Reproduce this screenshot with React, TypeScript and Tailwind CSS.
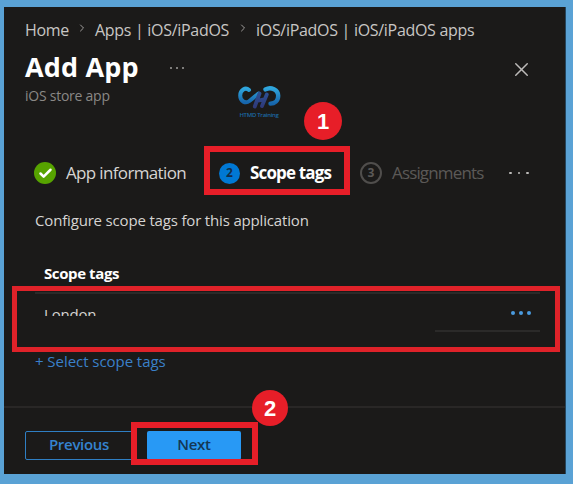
import { Check, ChevronRight, X } from "lucide-react";

interface MarkerProps {
  label: string;
  className: string;
}

function Marker({ label, className }: MarkerProps) {
  return (
    <span
      className={`absolute flex items-center justify-center rounded-full bg-[#e71e28] font-['Liberation_Sans'] font-bold text-white ${className}`}
    >
      {label}
    </span>
  );
}

function Dots({ className, size }: { className: string; size: string }) {
  return (
    <span className={`flex ${className}`}>
      {[0, 1, 2].map((i) => (
        <i key={i} className={`rounded-full bg-current ${size}`} />
      ))}
    </span>
  );
}

function Logo() {
  return (
    <div className="absolute left-[237px] top-[85px] w-[44px]">
      <svg viewBox="0 0 44 26" className="h-[26px] w-[44px]" fill="none" strokeLinecap="round">
        <defs>
          <linearGradient id="ring" x1="0" y1="0" x2="0" y2="1">
            <stop offset="0" stopColor="#2fa6dd" />
            <stop offset="1" stopColor="#1766ac" />
          </linearGradient>
          <linearGradient id="bar" x1="0" y1="0" x2="0" y2="1">
            <stop offset="0" stopColor="#2c4f93" />
            <stop offset="1" stopColor="#2f3a7a" />
          </linearGradient>
        </defs>
        <path d="M12 5C8.5 1.8 3.2 4.8 3.2 10.5C3.2 16.5 8.6 19 12.4 16C15.5 13.5 18.5 11 21.5 8.5" stroke="url(#ring)" strokeWidth="4" />
        <path d="M22.5 8.5L17.8 21.5M29.8 9.5L25 21M19.8 15.8L27.4 14.4" stroke="url(#bar)" strokeWidth="3.8" />
        <path d="M28.5 4.4C34 1.3 41.2 4.8 41.2 10.8C41.2 16 37.5 18.6 33.5 18.6" stroke="url(#ring)" strokeWidth="4.4" />
      </svg>
      <p className="-mt-px whitespace-nowrap text-center font-['Open_Sans'] text-[6px] font-semibold leading-[10px] tracking-[-0.3px] text-[#1b69a3]">
        HTMD Training
      </p>
    </div>
  );
}

export default function App() {
  return (
    <div className="relative h-[484px] w-[573px] overflow-hidden bg-[#5aa2d5] pl-1 pt-[7px] font-['Open_Sans',sans-serif]">
      <main className="flex h-[467px] w-[562px] flex-col border-r border-[#24465e] bg-[#1b1a19]">
        <nav className="flex h-[46px] items-center whitespace-nowrap pl-[21px] text-[16px] text-[#c8c6c4]">
          <span className="w-[51px] tracking-[-0.3px]">Home</span>
          <ChevronRight className="mb-1 h-3 w-[12px] text-[#a19f9d]" strokeWidth={2} />
          <span className="ml-[7px] w-[142px] tracking-[-0.3px]">Apps | iOS/iPadOS</span>
          <ChevronRight className="mb-1 h-3 w-[12px] text-[#a19f9d]" strokeWidth={2} />
          <span className="ml-[7px] tracking-[-0.3px]">iOS/iPadOS | iOS/iPadOS apps</span>
        </nav>

        <header className="flex h-[58px] items-start justify-between pl-[21px] pr-8">
          <div className="whitespace-nowrap">
            <div className="flex h-[30px] items-center">
              <h1 className="w-[145px] pb-0.5 text-[27px] font-bold leading-[30px] tracking-[0.15px] text-white">
                Add App
              </h1>
              <Dots className="gap-[4px] text-[#a19f9d]" size="size-[2px]" />
            </div>
            <p className="text-[14px] leading-[25px] tracking-[-0.25px] text-[#8a8886]">iOS store app</p>
          </div>
          <X className="mt-[5px] size-[23px] text-[#bdbbb9]" strokeWidth={1.5} />
        </header>

        <ol className="mt-10 flex h-[44px] items-center whitespace-nowrap pl-[30px] text-[17px]">
          <li className="flex w-[185px] items-center gap-[10px] text-[#d6d4d2]">
            <span className="flex size-[22px] items-center justify-center rounded-full bg-[#57a300]">
              <Check className="size-[15px] text-white" strokeWidth={4} />
            </span>
            <span className="tracking-[-0.65px]">App information</span>
          </li>
          <li className="flex w-[141px] items-center gap-[10px] font-bold text-white">
            <span className="flex size-[21px] items-center justify-center rounded-full bg-[#0078d4] text-[12px] text-[#122c48]">
              2
            </span>
            <span className="tracking-[-0.85px]">Scope tags</span>
          </li>
          <li className="flex w-[149px] items-center gap-[10px] text-[#5b5957]">
            <span className="flex size-[22px] items-center justify-center rounded-full border-2 border-[#504e4c] text-[12px] font-bold">
              3
            </span>
            <span className="tracking-[-0.85px]">Assignments</span>
          </li>
          <li>
            <Dots className="gap-[6px] text-[#bdbbb9]" size="size-[2.5px]" />
          </li>
        </ol>

        <section className="flex h-[205px] flex-col whitespace-nowrap pl-[31px] pr-[25px] text-[15px] text-[#d6d4d2]">
          <p className="mt-[13px] h-[24px] leading-6 tracking-[-0.17px]">Configure scope tags for this application</p>
          <h2 className="mt-[29px] flex h-[33px] items-start border-b-2 border-[#2b2a29] pl-[9px] font-bold leading-6 tracking-[-0.4px] text-white">
            Scope tags
          </h2>
          <div className="flex h-[36px] items-start justify-between pl-[9px] pr-[9px] pt-[8px]">
            <span className="h-[14px] overflow-hidden leading-6 tracking-[-0.2px]">London</span>
            <Dots className="mt-[9px] gap-[4px] text-[#4a9ade]" size="size-1" />
          </div>
          <div className="h-0.5 w-[105px] self-end bg-[#2b2a29]" />
          <a className="mt-[17px] font-medium leading-6 tracking-[-0.05px] text-[#3a80c9]">+ Select scope tags</a>
        </section>

        <footer className="mt-[6px] flex gap-3.5 border-t-2 border-[#292726] pl-[21px] pt-[23px] text-[15px] font-semibold">
          <button className="h-[29px] w-[108px] rounded-[2px] border border-[#2f7fc4] pb-0.5 tracking-[-0.3px] text-[#3583cf]">
            Previous
          </button>
          <button className="h-[29px] w-[94px] rounded-[2px] bg-[#2899f5] pb-0.5 tracking-[-0.3px] text-[#143753]">Next</button>
        </footer>
      </main>

      <Logo />

      {/* step callouts */}
      <div className="absolute left-[204px] top-[146px] h-[49px] w-[146px] border-6 border-[#e71e28]" />
      <div className="absolute left-[12px] top-[286px] h-[66px] w-[548px] border-5 border-[#df2229]" />
      <div className="absolute left-[131px] top-[422px] h-[43px] w-[127px] border-6 border-[#e71e28]" />
      <Marker label="1" className="left-[304px] top-[102px] size-[38px] text-[22px]" />
      <Marker label="2" className="left-[252px] top-[390px] size-[36px] text-[22px]" />
    </div>
  );
}
